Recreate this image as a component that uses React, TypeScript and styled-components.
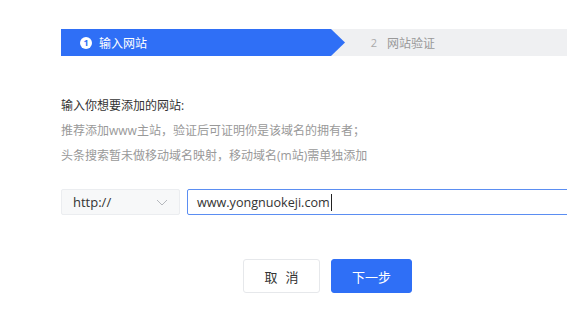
import React from "react";
import styled, { createGlobalStyle } from "styled-components";

const Global = createGlobalStyle`
  html, body { margin: 0; padding: 0; background: #fff; }
  body { font-family: "Open Sans", "Noto Sans CJK SC", sans-serif; overflow: hidden; }
`;

const Page = styled.div`
  width: 567px;
  height: 335px;
  padding-left: 61px;
  box-sizing: border-box;
  overflow: hidden;
`;

const Steps = styled.div`
  margin-top: 29px;
  height: 27px;
  display: flex;
  background: #eff0f2;
  margin-right: -61px;
`;

const Step = styled.div<{ $active?: boolean }>`
  display: flex;
  align-items: center;
  height: 100%;
  font-size: 12px;
  color: ${(p) => (p.$active ? "#fff" : "#999")};
  background: ${(p) => (p.$active ? "#2f6ff6" : "transparent")};
  ${(p) =>
    p.$active
      ? `width: 284px; padding-left: 19px; box-sizing: border-box;
         clip-path: polygon(0 0, 270px 0, 100% 50%, 270px 100%, 0 100%);`
      : `padding-left: 23px;`}
`;

const Num = styled.span<{ $active?: boolean }>`
  width: 12px;
  height: 12px;
  border-radius: 50%;
  display: inline-flex;
  align-items: center;
  justify-content: center;
  font-size: 9px;
  font-weight: 700;
  margin-right: 7px;
  ${(p) =>
    p.$active
      ? `background: #fff; color: #2f6ff6;`
      : `background: transparent; color: #aaa; font-size: 11px; font-weight: 400;`}
`;

const Info = styled.div`
  margin-top: 37px;
  font-size: 12px;
  line-height: 25px;
`;

const Title = styled.div`
  color: #333;
`;

const Hint = styled.div`
  color: #999;
`;

const Row = styled.div`
  margin-top: 21px;
  display: flex;
  gap: 7px;
  margin-right: -40px;
`;

const Select = styled.div`
  width: 119px;
  height: 26px;
  box-sizing: border-box;
  background: #f7f8f9;
  border: 1px solid #ebedf0;
  border-radius: 2px;
  display: flex;
  align-items: center;
  justify-content: space-between;
  padding: 0 11px 0 11px;
  font-size: 13px;
  color: #333;
`;

const Input = styled.div`
  flex: 1;
  height: 26px;
  box-sizing: border-box;
  border: 1px solid #5b8ef2;
  border-radius: 2px;
  display: flex;
  align-items: center;
  padding-left: 9px;
  font-size: 12.6px;
  color: #333;
`;

const Caret = styled.span`
  display: inline-block;
  width: 1px;
  height: 17px;
  background: #222;
  margin-left: 1px;
`;

const Buttons = styled.div`
  margin-top: 44px;
  display: flex;
  gap: 11px;
  padding-left: 182px;
`;

const Button = styled.button<{ $primary?: boolean }>`
  width: ${(p) => (p.$primary ? "81px" : "77px")};
  height: 34px;
  border-radius: 3px;
  font-family: "Noto Sans CJK SC", sans-serif;
  font-size: 13px;
  cursor: pointer;
  ${(p) =>
    p.$primary
      ? `background: #2f6ff6; color: #fff; border: 1px solid #2f6ff6;`
      : `background: #fff; color: #333; border: 1px solid #e6e8eb; letter-spacing: 8px; padding-left: 14px;`}
`;

export default function App() {
  return (
    <>
      <Global />
      <Page>
        <Steps>
          <Step $active>
            <Num $active>1</Num>输入网站
          </Step>
          <Step>
            <Num>2</Num>网站验证
          </Step>
        </Steps>
        <Info>
          <Title>输入你想要添加的网站:</Title>
          <Hint>推荐添加www主站，验证后可证明你是该域名的拥有者；</Hint>
          <Hint>头条搜索暂未做移动域名映射，移动域名(m站)需单独添加</Hint>
        </Info>
        <Row>
          <Select>
            http://
            <svg width="12" height="7" viewBox="0 0 12 7" fill="none">
              <path d="M1 1l5 5 5-5" stroke="#b5b8bd" strokeWidth="1" />
            </svg>
          </Select>
          <Input>
            www.yongnuokeji.com<Caret />
          </Input>
        </Row>
        <Buttons>
          <Button>取消</Button>
          <Button $primary>下一步</Button>
        </Buttons>
      </Page>
    </>
  );
}
